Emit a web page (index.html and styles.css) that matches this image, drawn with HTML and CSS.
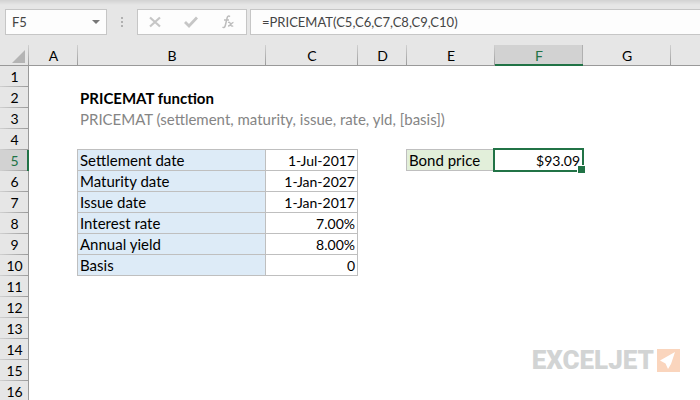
FILE: index.html
```html
<!DOCTYPE html>
<html lang="en">
<head>
<meta charset="utf-8">
<title>PRICEMAT function</title>
<link rel="stylesheet" href="styles.css">
</head>
<body>
<header class="bar">
  <div class="box name">
    <input class="field" aria-label="Name box" value="F5">
    <button class="drop" aria-label="Show names"><svg width="8" height="4" viewBox="0 0 8 4"><path d="M0 0h8L4 4z" fill="#777"/></svg></button>
  </div>
  <svg class="dots" width="2" height="10" viewBox="0 0 2 10"><path d="M0 0h2v2H0zM0 4h2v2H0zM0 8h2v2H0z" fill="#b0b0b0"/></svg>
  <div class="box tools">
    <button aria-label="Cancel"><svg width="12" height="12" viewBox="0 0 12 12"><path d="M1 1.500l10 9M11 1.500l-10 9" fill="none" stroke="#c6c6c6" stroke-width="2.200"/></svg></button>
    <button aria-label="Enter"><svg width="14" height="12" viewBox="0 0 14 12"><path d="M1 6l4 4 8-8.500" fill="none" stroke="#c6c6c6" stroke-width="2.800"/></svg></button>
    <button aria-label="Insert function"><svg width="14" height="14" viewBox="0 0 14 14" fill="none" stroke="#bdbdbd"><path d="M9 1.600C7.800.6 6.600 1 6.100 3L4.300 10.500C3.900 12.300 2.800 13 1.500 12.200M3 5h5" stroke-width="1.500"/><path d="M7 7.500c2-.8 2 .5 2.600 2s1.200 2.200 2.600 1.200M12.500 7.300c-2 0-3 4-5.500 3.700" stroke-width="1.300"/></svg></button>
  </div>
  <div class="box formula"><input class="field" aria-label="Formula" value="=PRICEMAT(C5,C6,C7,C8,C9,C10)"></div>
</header>
<main>
<table class="sheet">
  <colgroup><col class="w-head"><col class="w-thin"><col class="w-label"><col class="w-value"><col class="w-thin"><col class="w-mid"><col class="w-mid"><col class="w-mid"><col></colgroup>
  <thead>
    <tr><td class="corner"><svg width="13" height="13" viewBox="0 0 13 13"><path d="M13 0v13H0z" fill="#b4b4b4"/></svg></td><th scope="col">A</th><th scope="col">B</th><th scope="col">C</th><th scope="col">D</th><th scope="col">E</th><th scope="col" class="active">F</th><th scope="col">G</th><th scope="col"></th></tr>
  </thead>
  <tbody>
    <tr><th scope="row">1</th><td></td><td></td><td></td><td></td><td></td><td></td><td></td><td></td></tr>
    <tr><th scope="row">2</th><td></td><td class="title">PRICEMAT function</td><td></td><td></td><td></td><td></td><td></td><td></td></tr>
    <tr><th scope="row">3</th><td></td><td class="syntax">PRICEMAT (settlement, maturity, issue, rate, yld, [basis])</td><td></td><td></td><td></td><td></td><td></td><td></td></tr>
    <tr><th scope="row">4</th><td></td><td></td><td></td><td></td><td></td><td></td><td></td><td></td></tr>
    <tr><th scope="row" class="active">5</th><td></td><td class="data blue">Settlement date</td><td class="data num">1-Jul-2017</td><td></td><td class="data green">Bond price</td><td class="data num selected">$93.09<span class="ring"></span></td><td></td><td></td></tr>
    <tr><th scope="row">6</th><td></td><td class="data blue">Maturity date</td><td class="data num">1-Jan-2027</td><td></td><td></td><td></td><td></td><td></td></tr>
    <tr><th scope="row">7</th><td></td><td class="data blue">Issue date</td><td class="data num">1-Jan-2017</td><td></td><td></td><td></td><td></td><td></td></tr>
    <tr><th scope="row">8</th><td></td><td class="data blue">Interest rate</td><td class="data num">7.00%</td><td></td><td></td><td></td><td></td><td></td></tr>
    <tr><th scope="row">9</th><td></td><td class="data blue">Annual yield</td><td class="data num">8.00%</td><td></td><td></td><td></td><td></td><td></td></tr>
    <tr><th scope="row">10</th><td></td><td class="data blue">Basis</td><td class="data num">0</td><td></td><td></td><td></td><td></td><td></td></tr>
    <tr><th scope="row">11</th><td></td><td></td><td></td><td></td><td></td><td></td><td></td><td></td></tr>
    <tr><th scope="row">12</th><td></td><td></td><td></td><td></td><td></td><td></td><td></td><td></td></tr>
    <tr><th scope="row">13</th><td></td><td></td><td></td><td></td><td></td><td></td><td></td><td></td></tr>
    <tr><th scope="row">14</th><td></td><td></td><td></td><td></td><td></td><td></td><td></td><td></td></tr>
    <tr><th scope="row">15</th><td></td><td></td><td></td><td></td><td></td><td></td><td></td><td></td></tr>
    <tr><th scope="row">16</th><td></td><td></td><td></td><td></td><td></td><td></td><td></td><td></td></tr>
  </tbody>
</table>
</main>
<div class="brand">
  <span>EXCELJET</span>
  <svg width="23" height="23" viewBox="0 0 23 23"><path d="M0 0h23v23H0z" fill="#fad5bd"/><path d="M18 3L3 11.500l5.500 3L11 20l3-5z" fill="#fff"/></svg>
</div>
</body>
</html>
```
FILE: styles.css
```css
* { box-sizing: border-box; }

body {
  margin: 0;
  height: 100vh;
  overflow: hidden;
  position: relative;
  background: #fff;
  color: #000;
  font: 14px/20px Lato, "Liberation Sans", sans-serif;
}

.bar {
  display: flex;
  align-items: center;
  padding: 9px 0 10px 5px;
  background: linear-gradient(#d2d2d2, #e6e6e6 5px);
}

.box {
  display: flex;
  align-items: center;
  height: 26px;
  border: 1px solid #c6c6c6;
  background: #fdfdfd;
}

.name { width: 102px; padding: 0 6px; }
.dots { margin: 0 14px; }
.tools { width: 110px; justify-content: space-around; }
.formula { flex: 1; margin-left: 3px; padding-left: 11px; border-right: 0; }

.field {
  flex: 1;
  min-width: 0;
  padding: 0;
  border: 0;
  outline: 0;
  background: none;
  color: #444;
  font: inherit;
  font-size: 13px;
}

button {
  display: flex;
  padding: 0;
  border: 0;
  background: none;
}

.sheet {
  width: 100%;
  table-layout: fixed;
  border-spacing: 0;
}

.w-head { width: 29px; }
.w-thin { width: 49px; }
.w-label { width: 188px; }
.w-value { width: 92px; }
.w-mid { width: 88px; }

.sheet td,
.sheet th {
  height: 21px;
  padding: 0 2px;
  font-size: 15px;
  line-height: 20px;
  font-weight: 400;
  white-space: nowrap;
}

.sheet th,
.sheet .corner {
  padding: 0;
  font-size: 14px;
  text-align: center;
  background:
    linear-gradient(#d0d0d0, #999) right / 1px 100% no-repeat,
    linear-gradient(#999, #999) bottom / 100% 1px no-repeat,
    #e6e6e6;
}

.sheet thead th { padding-top: 1px; }

.sheet tbody th {
  background:
    linear-gradient(#999, #999) right / 1px 100% no-repeat,
    linear-gradient(90deg, #d0d0d0, #999) bottom / 100% 1px no-repeat,
    #e6e6e6;
}

.sheet thead th:last-child {
  background: linear-gradient(#999, #999) bottom / 100% 1px no-repeat, #e6e6e6;
}

.sheet thead th.active {
  color: #217346;
  background:
    linear-gradient(#217346, #217346) bottom / 100% 2px no-repeat,
    linear-gradient(#b0b0b0, #b0b0b0) right / 1px 100% no-repeat,
    #d2d2d2;
}

.sheet tbody th.active {
  color: #217346;
  background:
    linear-gradient(#217346, #217346) right / 2px 100% no-repeat,
    linear-gradient(90deg, #d0d0d0, #999) bottom / 100% 1px no-repeat,
    #d2d2d2;
}

.corner svg { display: block; margin: 2px 0 0 12px; }

.sheet .title { font-weight: 700; }
.sheet .syntax { color: #858585; }

.sheet .data {
  padding-top: 1px;
  line-height: 19px;
  border: 0 solid #bfbfbf;
  border-width: 0 1px 1px 0;
  box-shadow: -1px 0 #bfbfbf, 0 -1px #bfbfbf, -1px -1px #bfbfbf;
}

.blue { background: #ddebf7; }
.green { background: #e2efda; }
.sheet .num { font-size: 14px; text-align: right; }
.selected { position: relative; }

.ring {
  position: absolute;
  inset: -2px;
  border: 2px solid #217346;
}

.ring::after {
  content: "";
  position: absolute;
  right: -4px;
  bottom: -4px;
  width: 7px;
  height: 7px;
  border: 1px solid #fff;
  background: #217346;
}

.brand {
  position: absolute;
  right: 20px;
  bottom: 26px;
  display: flex;
  align-items: center;
  gap: 3px;
  color: #d2d4d4;
  font-family: Roboto, Lato, sans-serif;
  font-size: 26px;
  font-weight: 900;
  line-height: 28px;
}
```
